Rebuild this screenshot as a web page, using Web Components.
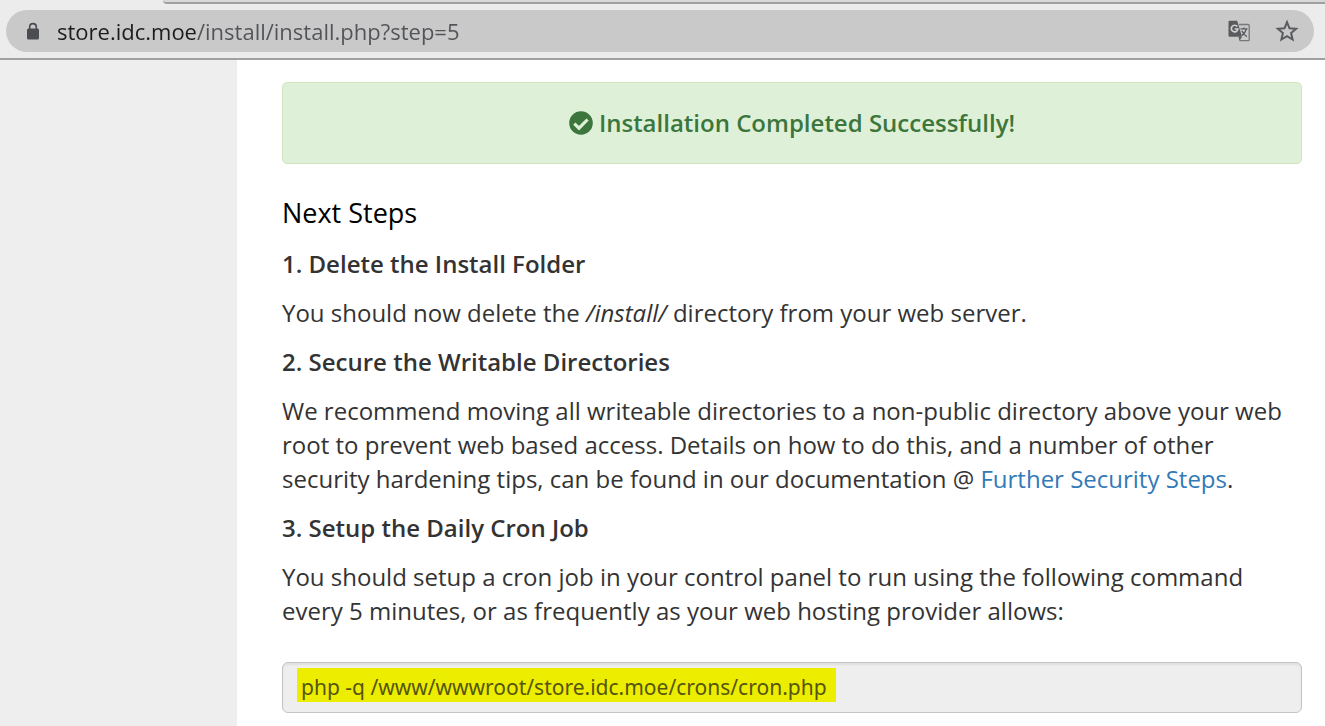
<!DOCTYPE html>
<html lang="en">
<head>
<meta charset="utf-8">
<title>Installation Completed</title>
<style>
  body { margin: 0; min-height: 100vh; background: #eee; font-family: "Open Sans", "Noto Sans", sans-serif; color: #333; }
</style>
</head>
<body>
<browser-window>
  <address-bar slot="toolbar" url="store.idc.moe/install/install.php?step=5"></address-bar>
  <success-alert>Installation Completed Successfully!</success-alert>
  <install-steps>
    <span slot="title">Next Steps</span>
    <install-step heading="1. Delete the Install Folder">You should now delete the <em>/install/</em> directory from your web server.</install-step>
    <install-step heading="2. Secure the Writable Directories">We recommend moving all writeable directories to a non-public directory above your web root to prevent web based access. Details on how to do this, and a number of other security hardening tips, can be found in our documentation @ <a href="#security">Further Security Steps</a>.</install-step>
    <install-step heading="3. Setup the Daily Cron Job">You should setup a cron job in your control panel to run using the following command every 5 minutes, or as frequently as your web hosting provider allows:</install-step>
  </install-steps>
  <command-field value="php -q /www/wwwroot/store.idc.moe/crons/cron.php"></command-field>
</browser-window>
<script>
const define = (name, render, setup) => customElements.define(name, class extends HTMLElement {
  connectedCallback() {
    if (this.shadowRoot) return;
    const t = document.createElement('template');
    t.innerHTML = render;
    this.attachShadow({ mode: 'open' }).append(t.content.cloneNode(true));
    if (setup) setup(this, this.shadowRoot);
  }
});

define('browser-window', `
  <style>
    :host { display: flex; flex-direction: column; min-height: 100vh; }
    .page { flex: 1; display: grid; grid-template-columns: 237px minmax(0, 1fr); }
    main { background: #fff; padding: 22px 23px 12px 45px; }
  </style>
  <slot name="toolbar"></slot>
  <div class="page"><aside></aside><main><slot></slot></main></div>`);

define('address-bar', `
  <style>
    :host { display: block; background: #ececec; border-bottom: 2px solid #a0a0a0; }
    .tabs { height: 4px; margin-left: 163px; box-sizing: border-box; border-bottom: 2px solid #a0a0a0; border-bottom-left-radius: 6px; background: #d8d8d8; }
    .bar { display: flex; align-items: center; height: 42px; margin: 6px 11px 6px 6px; border-radius: 21px; background: #c9c9c9; padding: 0 15px 0 16px; box-sizing: border-box; }
    svg { display: block; }
    .lock { flex: none; margin-right: 13px; }
    input { flex: 1; min-width: 0; border: 0; padding: 0; outline: 0; height: 34px; font: 22px "Open Sans", sans-serif;
      color: transparent; background: linear-gradient(90deg, #1c1c1e 140px, #515357 140px); -webkit-background-clip: text; background-clip: text; }
    button { border: 0; padding: 0; background: none; color: #5a5b5e; margin-left: 24px; }
  </style>
  <div class="tabs"></div>
  <div class="bar">
    <svg class="lock" width="22" height="22" viewBox="0 0 22 22" aria-hidden="true"><rect x="5" y="8.500" width="12" height="11" rx="1.5" fill="#4c4d51"/><path d="M7.700 9.500V6.900a3.300 3.300 0 0 1 6.600 0V9.500" fill="none" stroke="#4c4d51" stroke-width="1.6"/></svg>
    <input type="text" aria-label="Address" spellcheck="false">
    <button type="button" aria-label="Translate this page"><svg width="24" height="24" viewBox="0 0 24 24"><path d="M12 5.5h9.2a1 1 0 0 1 1 1v14.2a1 1 0 0 1-1 1H12.5" fill="none" stroke="#77787a" stroke-width="1.3"/><path d="M2.8 1.8h7.4l4.8 16H2.8A1.3 1.3 0 0 1 1.5 16.500V3.100A1.300 1.300 0 0 1 2.800 1.800Z" fill="currentColor"/><path d="M11.500 17.800h3.500l-2.500 3.900Z" fill="currentColor"/><path d="M10.300 7.600A3.300 3.300 0 1 0 10.900 10H7.600" fill="none" stroke="#d2d2d2" stroke-width="1.7"/><path d="M13.500 9.900h7M17 8.500v1.400M19.300 10c-.6 2.800-2.400 5-4.600 6.600M14.800 11.800c1 2.400 2.700 4.300 5 5.800" fill="none" stroke="currentColor" stroke-width="1.3"/></svg></button>
    <button type="button" aria-label="Bookmark this page"><svg width="24" height="24" viewBox="0 0 24 24"><path d="M12 3.200l2.500 6.100 6.600.5-5 4.300 1.500 6.400-5.600-3.400-5.600 3.400 1.500-6.400-5-4.300 6.600-.5Z" fill="none" stroke="currentColor" stroke-width="2"/></svg></button>
  </div>`, (host, root) => { root.querySelector('input').value = host.getAttribute('url'); });

define('success-alert', `
  <style>
    :host { display: block; }
    div { display: flex; justify-content: center; align-items: center; gap: 6px; padding: 23px 15px; border: 1px solid #d0e6c0; border-radius: 5px; background: #dff0d8; color: #3c763d; font-size: 24px; font-weight: 600; line-height: 34px; }
    svg { flex: none; }
  </style>
  <div role="status">
    <svg width="24" height="24" viewBox="0 0 24 24" aria-hidden="true"><circle cx="12" cy="12" r="11.800" fill="#3c763d"/><path d="M5.300 12.700l4.700 4.500 8.600-8.700" fill="none" stroke="#dff0d8" stroke-width="3.200"/></svg>
    <span><slot></slot></span>
  </div>`);

define('install-steps', `
  <style>
    :host { display: block; margin-top: 32px; }
    h2 { margin: 0 0 17px; font-size: 27px; font-weight: 400; line-height: 34px; color: #000; }
  </style>
  <h2><slot name="title"></slot></h2>
  <slot></slot>`);

define('install-step', `
  <style>
    :host { display: block; font-size: 24px; line-height: 34px; }
    h3, p { margin: 0 0 15px; font-size: inherit; }
    h3 { font-weight: 600; }
    ::slotted(a) { color: #337ab7; text-decoration: none; }
  </style>
  <h3></h3>
  <p><slot></slot></p>`, (host, root) => { root.querySelector('h3').textContent = host.getAttribute('heading'); });

define('command-field', `
  <style>
    :host { display: block; margin-top: 34px; }
    div { display: flex; padding: 5px 14px 10px; border: 1px solid #c4c4c4; border-radius: 6px; background: #eee; box-shadow: inset 0 2px 2px rgba(0, 0, 0, .06); }
    input { field-sizing: content; max-width: 100%; box-sizing: border-box; height: 34px; border: 0; outline: 0; padding: 4px 9px 0 4px; background: #eded00; color: #555511; font: 21px "Noto Sans", sans-serif; }
  </style>
  <div><input type="text" readonly aria-label="Cron command"></div>`, (host, root) => { root.querySelector('input').value = host.getAttribute('value'); });
</script>
</body>
</html>
